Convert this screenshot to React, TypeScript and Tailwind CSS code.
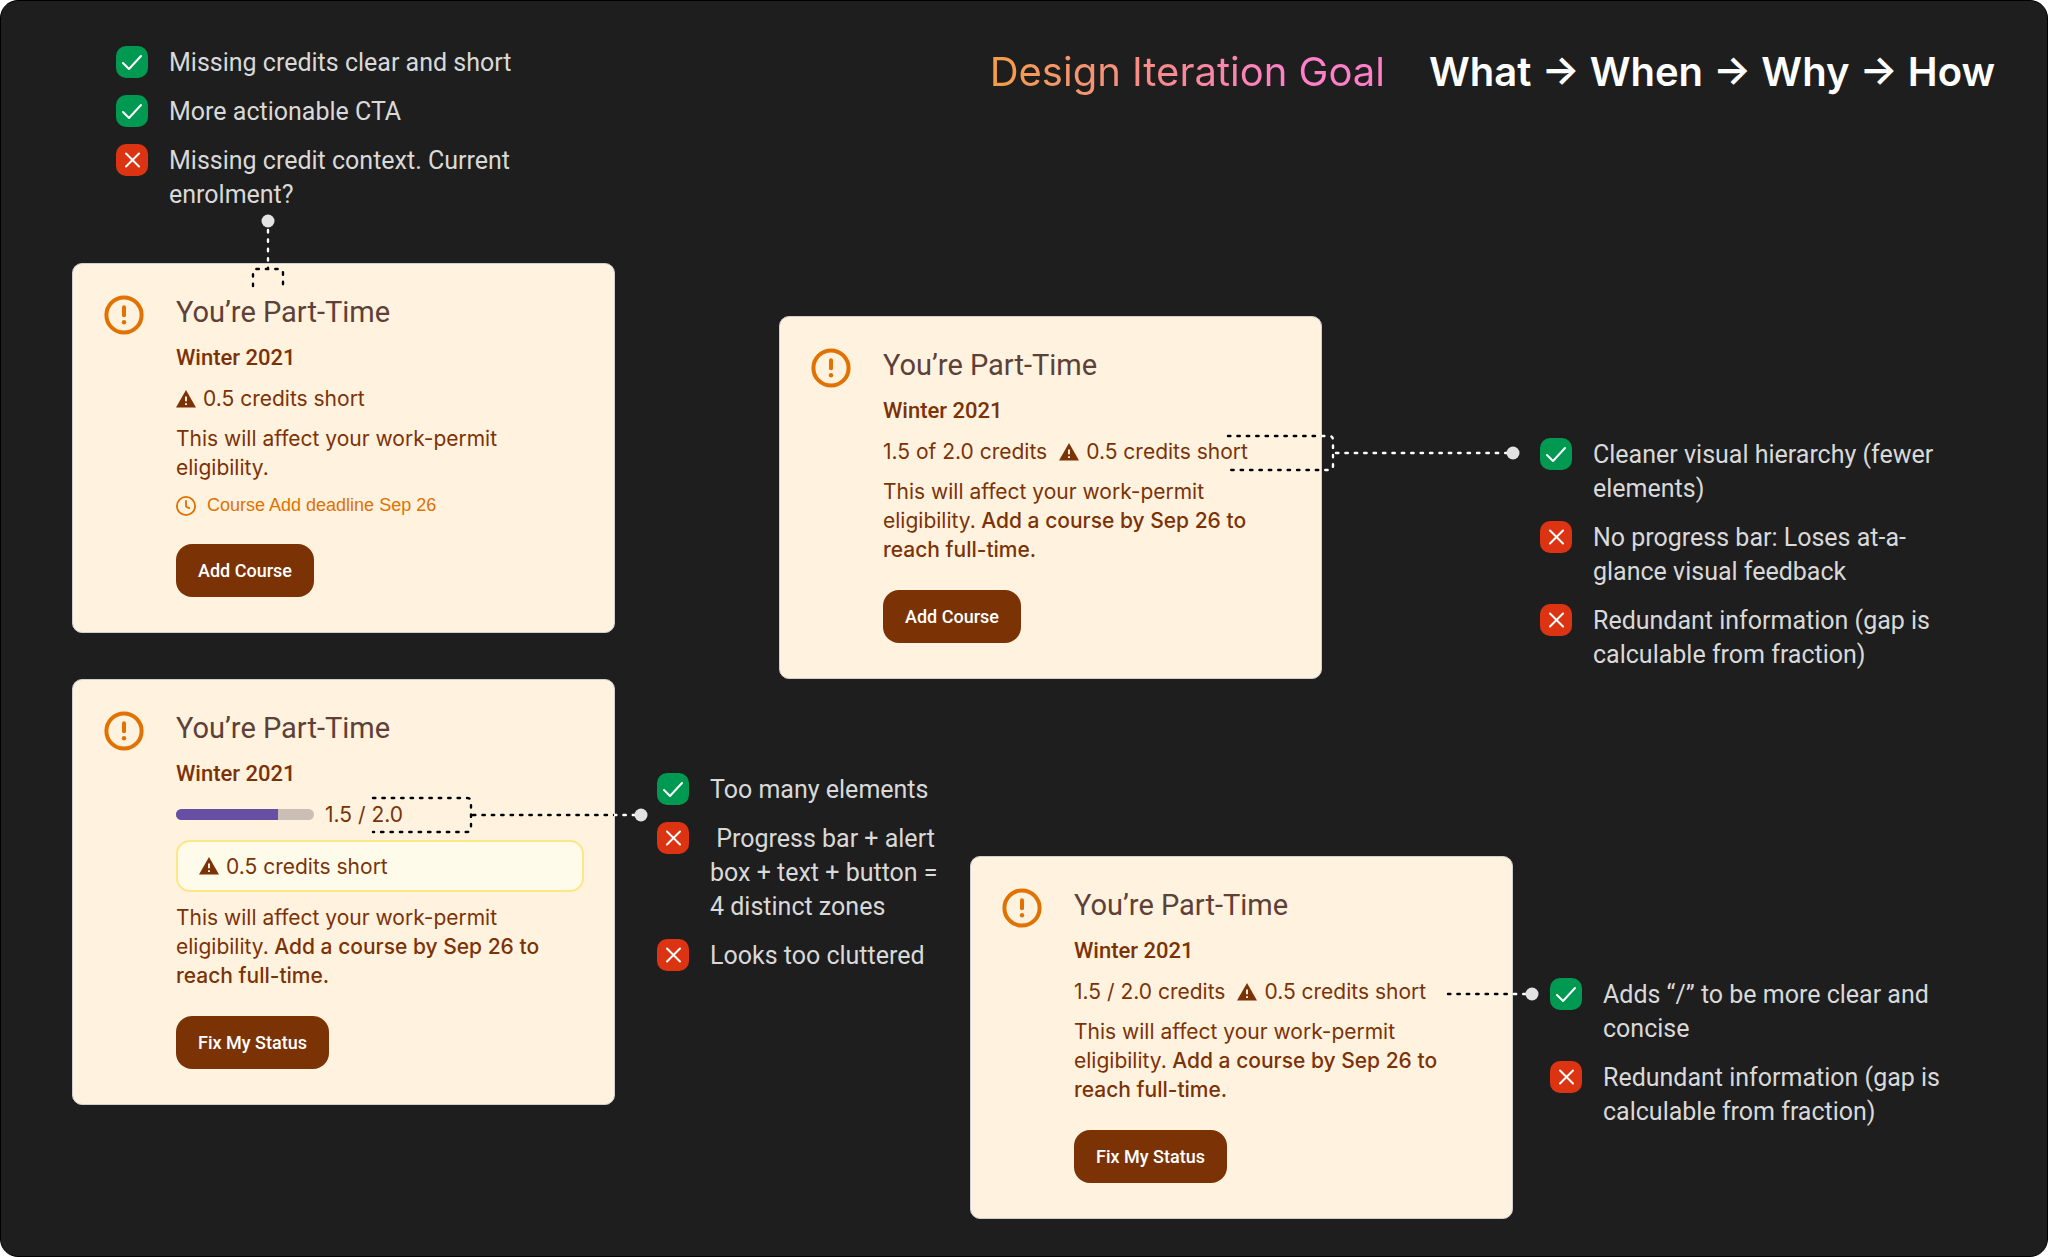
import type { ReactNode } from 'react';

type NoteItem = { ok: boolean; text: string };
type Point = { x: number; y: number };

const NOTES_SHORT: NoteItem[] = [
  { ok: true, text: 'Missing credits clear and short' },
  { ok: true, text: 'More actionable CTA' },
  { ok: false, text: 'Missing credit context. Current enrolment?' },
];

const NOTES_BAR: NoteItem[] = [
  { ok: true, text: 'Too many elements' },
  { ok: false, text: '\u00a0Progress bar + alert box + text + button = 4 distinct zones' },
  { ok: false, text: 'Looks too cluttered' },
];

const NOTES_FRACTION: NoteItem[] = [
  { ok: true, text: 'Cleaner visual hierarchy (fewer elements)' },
  { ok: false, text: 'No progress bar: Loses at-a-glance visual feedback' },
  { ok: false, text: 'Redundant information (gap is calculable from fraction)' },
];

const NOTES_SLASH: NoteItem[] = [
  { ok: true, text: 'Adds “/” to be more clear and concise' },
  { ok: false, text: 'Redundant information (gap is calculable from fraction)' },
];

function StatusIcon({ ok }: { ok: boolean }) {
  return (
    <svg
      className={ok ? 'size-8 shrink-0 rounded-[10px] bg-[#009951]' : 'size-8 shrink-0 rounded-[10px] bg-[#dc3412]'}
      viewBox="0 0 32 32"
      fill="none"
      stroke="white"
      strokeWidth={2}
      strokeLinecap="round"
      strokeLinejoin="round"
      role="img"
      aria-label={ok ? 'Pro' : 'Con'}
    >
      {ok ? <path d="M7 17l6 6L25 10" /> : <path d="M10 9.5l13 13M23 9.5l-13 13" />}
    </svg>
  );
}

function Notes({ items, className }: { items: NoteItem[]; className: string }) {
  return (
    <ul className={`flex flex-col gap-[15px] font-['Roboto',sans-serif] text-[25px] leading-[34px] text-[#d9d9d9] ${className}`}>
      {items.map(({ ok, text }) => (
        <li key={text} className="flex items-start gap-[21px]">
          <StatusIcon ok={ok} />
          <span>{text}</span>
        </li>
      ))}
    </ul>
  );
}

function AlertCircle() {
  return (
    <svg className="mt-px size-10 shrink-0 text-[#e17100]" viewBox="0 0 20 20" fill="none" aria-hidden="true">
      <circle cx="10" cy="10" r="8.8" stroke="currentColor" strokeWidth={2} />
      <rect x="9" y="5.1" width="2" height="6" rx="1" fill="currentColor" />
      <circle cx="10" cy="13.6" r="1.1" fill="currentColor" />
    </svg>
  );
}

function WarningTriangle() {
  return (
    <svg className="h-[18px] w-5 shrink-0" viewBox="0 0 20 18" aria-hidden="true">
      <path d="M10 0l10 17.5H0z" fill="currentColor" />
      <path d="M10 6.5v4.8M10 13.2v1.8" stroke="#fff1de" strokeWidth={2} />
    </svg>
  );
}

function ClockIcon() {
  return (
    <svg className="size-5 shrink-0" viewBox="1 1 22 22" fill="none" stroke="currentColor" strokeWidth={2} strokeLinecap="round" aria-hidden="true">
      <circle cx="12" cy="12" r="10" />
      <path d="M12 6.5v6l3.5 1.8" strokeLinejoin="round" />
    </svg>
  );
}

// Light stroke outside of the card, dark copy clipped to the card's own box
function Connector({ path, dot }: { path: string; dot: Point }) {
  const stroke = { fill: 'none', strokeWidth: 2.4, strokeLinecap: 'round' as const, strokeDasharray: '2.4 7' };
  return (
    <>
      <svg className="pointer-events-none absolute inset-0 size-full overflow-visible" aria-hidden="true">
        <path d={path} stroke="white" {...stroke} />
        <circle cx={dot.x} cy={dot.y} r="6.5" fill="#e3e3e3" />
      </svg>
      <svg className="pointer-events-none absolute inset-0 size-full overflow-hidden" aria-hidden="true">
        <path d={path} stroke="black" {...stroke} />
      </svg>
    </>
  );
}

function CreditsShort() {
  return (
    <span className="flex items-center gap-[7px]">
      <WarningTriangle />
      0.5 credits short
    </span>
  );
}

function StatusCard({ cta, connector, children }: { cta: string; connector: ReactNode; children: ReactNode }) {
  return (
    <article className="relative flex w-[543px] shrink-0 gap-8 rounded-[10px] border border-[#cfcfcf] bg-[#fff2df] pt-[30px] pr-[30px] pb-[35px] pl-[31px] text-[#7b3306]">
      <AlertCircle />
      <div className="min-w-0 flex-1 font-['Inter',sans-serif] text-[21px] leading-[29px]">
        <h2 className="font-['Roboto',sans-serif] text-[29px] leading-[37px] text-[#5d4037]">You’re Part-Time</h2>
        <h3 className="mt-3 font-['Roboto',sans-serif] text-[22px] leading-[29px] font-medium">Winter 2021</h3>
        <div className="mt-3 flex flex-col gap-[11px]">{children}</div>
        <button
          type="button"
          className="mt-[26px] h-[53px] rounded-2xl bg-[#7b3306] px-[22px] font-['Roboto',sans-serif] text-[18px] font-medium text-white hover:bg-[#973c00]"
        >
          {cta}
        </button>
      </div>
      {connector}
    </article>
  );
}

function Body({ withAction }: { withAction?: boolean }) {
  return (
    <p>
      This will affect your work-permit eligibility.
      {withAction && <strong className="font-medium"> Add a course by Sep 26 to reach full-time.</strong>}
    </p>
  );
}

export default function App() {
  return (
    <main className="flex min-h-screen rounded-[18px] border border-black bg-[#1e1e1e] pb-[37px] pl-[71px]">
      <section className="w-[543px] shrink-0 pt-[45px]">
        <Notes items={NOTES_SHORT} className="ml-11 max-w-[410px]" />

        <div className="mt-[51px]">
          <StatusCard
            cta="Add Course"
            connector={<Connector path="M195 -34V5M180 22V9q0 -4 4 -4h22q4 0 4 4V22" dot={{ x: 195, y: -43 }} />}
          >
            <CreditsShort />
            <Body />
            <p className="flex items-center gap-[11px] font-['Liberation_Sans',sans-serif] text-[18px] leading-[25px] text-[#e17100]">
              <ClockIcon />
              Course Add deadline Sep 26
            </p>
          </StatusCard>
        </div>

        <div className="mt-[46px] flex items-start">
          <StatusCard
            cta="Fix My Status"
            connector={<Connector path="M300 118h94q4 0 4 4v26q0 4 -4 4h-94M400 135H562" dot={{ x: 568, y: 135 }} />}
          >
            <div className="flex items-center gap-[11px]">
              <div
                role="progressbar"
                aria-label="Credits"
                aria-valuenow={1.5}
                aria-valuemax={2}
                className="h-[11px] w-[138px] overflow-hidden rounded-full bg-[#cbbfb5]"
              >
                <div className="h-full w-[74%] bg-[#6750a4]" />
              </div>
              <span>1.5 / 2.0</span>
            </div>
            <div className="flex h-[52px] items-center rounded-[14px] border-2 border-[#fee685] bg-[#fffbeb] px-[21px]">
              <CreditsShort />
            </div>
            <Body withAction />
          </StatusCard>
          <Notes items={NOTES_BAR} className="mt-[94px] ml-[42px] w-[284px] shrink-0" />
        </div>
      </section>

      <section className="ml-[164px] min-w-0 flex-1 pt-[47px]">
        <header className="flex justify-end gap-11 pr-[52px] font-['Inter',sans-serif] text-[40px] leading-[48px] whitespace-nowrap">
          <h1 className="bg-linear-to-r from-[#f59e42] via-[#f88a8f] via-45% to-[#ff80c8] to-75% bg-clip-text text-transparent">
            Design Iteration Goal
          </h1>
          <p className="font-semibold text-white">What → When → Why → How</p>
        </header>

        <div className="mt-[220px] flex items-start">
          <StatusCard
            cta="Add Course"
            connector={<Connector path="M448 119h101q4 0 4 4v26q0 4 -4 4h-101M556 136H728" dot={{ x: 733, y: 136 }} />}
          >
            <div className="flex items-center gap-3">
              <span>1.5 of 2.0 credits</span>
              <CreditsShort />
            </div>
            <Body withAction />
          </StatusCard>
          <Notes items={NOTES_FRACTION} className="mt-[122px] ml-[218px] max-w-[404px]" />
        </div>

        <div className="mt-[177px] ml-[191px] flex items-start">
          <StatusCard
            cta="Fix My Status"
            connector={<Connector path="M477 137H556" dot={{ x: 561, y: 137 }} />}
          >
            <div className="flex items-center gap-3">
              <span>1.5 / 2.0 credits</span>
              <CreditsShort />
            </div>
            <Body withAction />
          </StatusCard>
          <Notes items={NOTES_SLASH} className="mt-[122px] ml-[37px] max-w-[404px]" />
        </div>
      </section>
    </main>
  );
}
